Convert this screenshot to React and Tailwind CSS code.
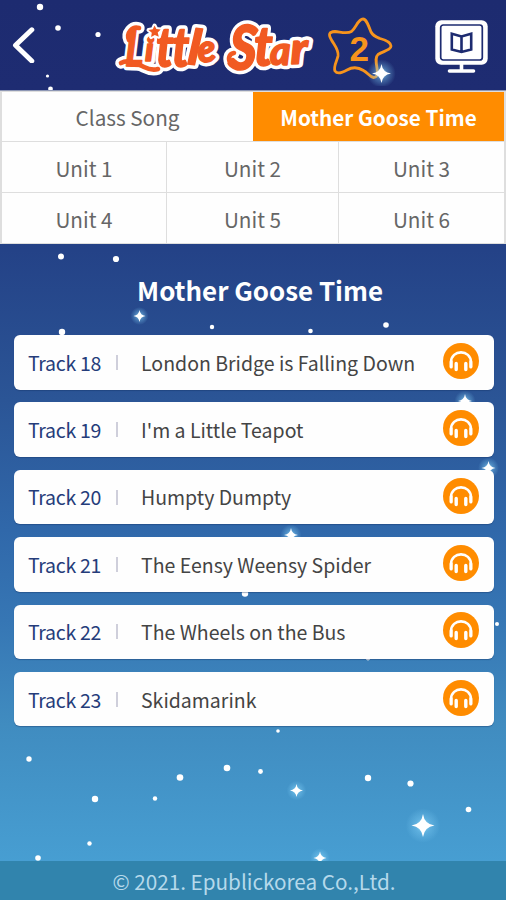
import React, { useState } from 'react';

const UNITS = ['Unit 1', 'Unit 2', 'Unit 3', 'Unit 4', 'Unit 5', 'Unit 6'];

const TRACKS = [
  { no: 18, title: 'London Bridge is Falling Down' },
  { no: 19, title: "I'm a Little Teapot" },
  { no: 20, title: 'Humpty Dumpty' },
  { no: 21, title: 'The Eensy Weensy Spider' },
  { no: 22, title: 'The Wheels on the Bus' },
  { no: 23, title: 'Skidamarink' },
];

// x, y, radius
const DOTS = [
  [40, 7, 3.2], [58, 28, 2.8], [98, 34.5, 2.6], [47.5, 76, 1.6], [50.5, 89, 2.4],
  [61, 256.5, 3], [116, 259, 3.1], [62, 332, 3.2], [212, 327, 2.2], [310.5, 331, 2.3], [386, 325, 2.8],
  [245, 593.5, 3.2], [497, 624, 2], [368, 658, 2.4],
  [278, 731, 1.8], [29, 759, 2.7], [180, 777.5, 3.3], [227, 768, 3.3], [260.5, 771.5, 2.4],
  [95, 799, 3.2], [155, 798.5, 2.2], [368, 778, 3.2], [410.5, 783.5, 3.1], [468.5, 809.5, 2.8],
  [89.5, 843.5, 2.2], [38, 858, 2.8],
];

// x, y, ray length
const SPARKLES = [
  [139.5, 316, 6], [465, 401, 7], [488.5, 468, 7], [291, 535, 7],
  [296.5, 790.5, 6.5], [423, 825.5, 11.5], [320, 858, 6.5],
];

const Sparkle = ({ x, y, r }) => (
  <g transform={`translate(${x} ${y}) scale(${r})`}>
    <circle r="1.500" fill="url(#glow)" />
    <path d="M0-1Q.12-.12 1 0Q.12.12 0 1Q-.12.12-1 0Q-.12-.12 0-1Z" fill="#fff" />
    <circle r=".3" fill="#fff" />
  </g>
);

const NightSky = () => (
  <svg className="absolute inset-0 h-full w-full" viewBox="0 0 506 900" aria-hidden="true">
    <defs>
      <radialGradient id="glow">
        <stop offset="0" stopColor="#a5f0ff" stopOpacity="0.85" />
        <stop offset="0.45" stopColor="#7fcdf5" stopOpacity="0.4" />
        <stop offset="1" stopColor="#7fcdf5" stopOpacity="0" />
      </radialGradient>
    </defs>
    {DOTS.map(([x, y, r]) => <circle key={`${x}-${y}`} cx={x} cy={y} r={r} fill="#fff" />)}
    {SPARKLES.map(([x, y, r]) => <Sparkle key={`${x}-${y}`} x={x} y={y} r={r} />)}
  </svg>
);

const LOGO_LETTERS = [
  { ch: 'L', x: 125, y: 66, size: 52, rot: 2, sx: 0.72 },
  { ch: 'i', x: 145, y: 61, size: 33, rot: 0, sx: 1.05 },
  { ch: 't', x: 156, y: 67, size: 55, rot: 0, sx: 0.85 },
  { ch: 't', x: 172, y: 67, size: 55, rot: 0, sx: 0.85 },
  { ch: 'l', x: 187, y: 64, size: 49, rot: 6, sx: 1 },
  { ch: 'e', x: 199, y: 63, size: 38, rot: -8, sx: 0.98 },
  { ch: 'S', x: 228, y: 69, size: 62, rot: 3, sx: 0.87 },
  { ch: 't', x: 254, y: 66, size: 56, rot: 0, sx: 0.9 },
  { ch: 'a', x: 270, y: 65, size: 40, rot: 0, sx: 0.98 },
  { ch: 'r', x: 291, y: 64, size: 44, rot: -2, sx: 1.1 },
];

const LogoText = ({ color, width }) => (
  <g fill={color} stroke={color} strokeWidth={width} strokeLinejoin="round" fontFamily="Lato, 'Liberation Sans', sans-serif" fontWeight="900" fontStyle="italic">
    {LOGO_LETTERS.map((l, i) => (
      <text key={i} fontSize={l.size} transform={`translate(${l.x} ${l.y}) rotate(${l.rot}) scale(${l.sx} 1)`}>{l.ch}</text>
    ))}
  </g>
);

// curls drawn around the capitals
const LogoSwashes = ({ color, width }) => (
  <g fill="none" stroke={color} strokeWidth={width} strokeLinecap="round" strokeLinejoin="round">
    <path d="M129 40C126 33 132 26 139 28" />
    <path d="M121 63C128 59 136 63 144 67Q152 71 158 69" />
    <path d="M234 53C228 54 228 60 231 64" />
  </g>
);

const Logo = () => (
  <svg className="h-[80px] w-[290px] shrink-0" viewBox="110 6 290 80" role="img" aria-label="Little Star 2">
    <LogoText color="#fff" width="8.500" />
    <LogoSwashes color="#fff" width="11.500" />
    <LogoText color="#f15a22" width="1.500" />
    <LogoSwashes color="#f15a22" width="4.600" />
    <path
      d="M154.500 25.500l1.900 3.600 4.300.4-3 3 1.100 4.300-4-1.900-3.700 2.200.7-4.400-3.300-2.700 4.300-.7z"
      fill="#f15a22" stroke="#fff" strokeWidth="4" paintOrder="stroke" strokeLinejoin="round"
    />
    <path
      d="M363 19C366 19 368 24 371 32C373 36 376 37 380 38.500C386 40 391 43 391 46C391 50 384 51 378 54.500C375 57 376 62 377 68C378 75 377 77.500 373.500 77.500C370 77 368 73 363.500 70.500C358 67 353 66.500 347 70C341 73.500 337 74 335 71C333 67 337 61 338 56C339 50 335 46 331.500 40C328 34 329 32 335 31.500C341 32 347 34 351.500 31.500C356 28 358 19 363 19Z"
      fill="none" stroke="#f7941d" strokeWidth="2.800" strokeLinejoin="round"
    />
    <text x="349.500" y="61" fontSize="35" fontWeight="700" fontFamily="'Liberation Sans', sans-serif" fill="#f7941d">2</text>
    <Sparkle x={381.5} y={73.5} r={9.5} />
  </svg>
);

const BackIcon = () => (
  <svg className="h-9 w-6" viewBox="0 0 24 36" fill="none" stroke="#fff" strokeWidth="5" strokeLinecap="round" strokeLinejoin="round">
    <path d="M19.800 2.800L3.500 18.300L19.800 34" />
  </svg>
);

const EbookIcon = () => (
  <svg className="h-[54px] w-[53px]" viewBox="0 0 53 54">
    <rect x=".3" y=".3" width="52.400" height="44.400" rx="6" fill="#fff" />
    <rect x="5.700" y="5" width="41.600" height="35" rx="2.500" fill="#fff" stroke="#1d2b70" strokeWidth="1.700" />
    <path d="M16.800 13.800L26.500 16.500L36.200 13.800V29.500L26.500 32L16.800 29.500ZM26.500 16.500V32" fill="#fff" stroke="#1d2b70" strokeWidth="2.600" />
    <path d="M26.500 44V50M14.500 51H38.500" stroke="#fff" strokeWidth="3.600" strokeLinecap="round" />
  </svg>
);

const HeadphoneIcon = () => (
  <svg className="size-9" viewBox="0 0 36 36">
    <circle cx="18" cy="18" r="18" fill="#ff8c00" />
    <path d="M8 24.500V19.500C8 6 28 6 28 19.500V24.500" fill="none" stroke="#fff" strokeWidth="2.600" />
    <path d="M8.200 18.500V24M27.800 18.500V24" stroke="#fff" strokeWidth="3" strokeLinecap="round" />
    <path d="M13.200 20.500V26.500M22.800 20.500V26.500" stroke="#fff" strokeWidth="3.400" strokeLinecap="round" />
  </svg>
);

const TrackRow = ({ track }) => (
  <li className="flex h-[54.500px] items-center rounded-md bg-[#fefefe] pr-[15px] pl-[14.500px] shadow-[0_1px_1px_rgba(20,50,100,0.4)]">
    <span className="w-[88px] shrink-0 text-[19.500px] tracking-[-0.300px] text-[#253c7a]">Track {track.no}</span>
    <span className="mr-[23px] h-[15px] w-0.5 shrink-0 bg-[#cfcfdb]" />
    <span className="flex-1 text-[19.500px] whitespace-nowrap text-[#444]">{track.title}</span>
    <button className="-mt-[3px] shrink-0" aria-label="Play"><HeadphoneIcon /></button>
  </li>
);

const App = () => {
  const [tab, setTab] = useState('goose');

  const tabClass = (id) =>
    tab === id ? 'bg-[#ff8c00] font-bold text-white' : 'bg-[#fefefe] text-[#666]';

  return (
    <div className="relative flex h-[900px] w-[506px] flex-col overflow-hidden bg-[linear-gradient(180deg,#1d2b70_0px,#1e2c72_90px,#244287_250px,#2b5596_400px,#3068aa_530px,#3676b4_620px,#408cc0_725px,#479ed2_861px)] font-['Noto_Sans_CJK_KR','Noto_Sans',sans-serif]">
      <NightSky />

      <header className="relative flex h-[91px] shrink-0 items-start border-b border-[#8e97b5]">
        <button className="mt-[27px] ml-3" aria-label="Back"><BackIcon /></button>
        <div className="mt-1.5 ml-[74px]"><Logo /></div>
        <button className="mt-5 ml-[35px]" aria-label="E-book"><EbookIcon /></button>
      </header>

      <nav className="relative shrink-0 border-x-2 border-[#dedede] bg-[#dedede] text-[20.700px]">
        <div className="grid h-[51px] grid-cols-2 border-t border-b border-[#dedede]">
          <button className={`pt-0.5 ${tabClass('class')}`} onClick={() => setTab('class')}>Class Song</button>
          <button className={`pt-0.5 ${tabClass('goose')}`} onClick={() => setTab('goose')}>Mother Goose Time</button>
        </div>
        <div className="grid grid-cols-[164px_171px_1fr] gap-px border-b border-[#dedede]">
          {UNITS.map((unit) => (
            <button key={unit} className="h-[50px] bg-[#fefefe] pt-1 text-[#666]">{unit}</button>
          ))}
        </div>
      </nav>

      <main className="relative flex-1">
        <h1 className="mt-[26px] ml-[14px] text-center text-[25.900px] leading-[40px] font-bold text-white">Mother Goose Time</h1>
        <ul className="mt-[25px] mr-3 ml-[13.500px] flex flex-col gap-[12.900px]">
          {TRACKS.map((track) => <TrackRow key={track.no} track={track} />)}
        </ul>
      </main>

      <footer className="relative flex h-[39px] shrink-0 items-center justify-center bg-[#3184ad] pt-0.5 pl-0.5 text-[20.700px] text-[#b5d9eb]">
        © 2021. Epublickorea Co.,Ltd.
      </footer>
    </div>
  );
};

export default App;
